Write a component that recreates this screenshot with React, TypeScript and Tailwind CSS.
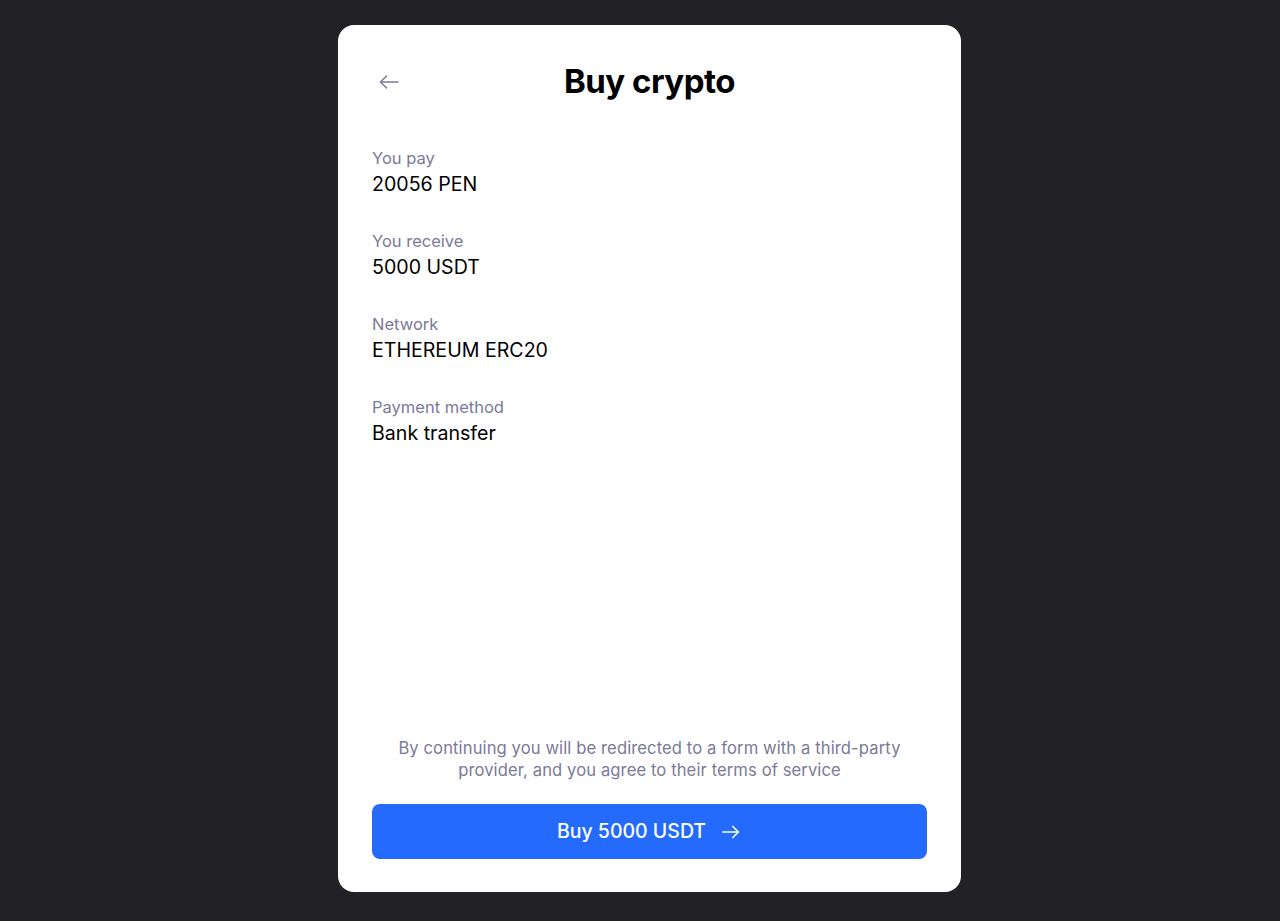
import React from 'react';

const fields = [
  { label: 'You pay', value: '20056 PEN' },
  { label: 'You receive', value: '5000 USDT' },
  { label: 'Network', value: 'ETHEREUM ERC20' },
  { label: 'Payment method', value: 'Bank transfer' },
];

const App: React.FC = () => {
  return (
    <div
      className="min-h-screen w-full bg-[#222126] flex justify-center pt-[25px] pl-[19px]"
      style={{ fontFamily: 'Inter, "Noto Sans", sans-serif' }}
    >
      <div className="w-[623px] h-[867px] bg-white rounded-[16px] flex flex-col px-[34px] pt-[33px] pb-[33px]">
        {/* header */}
        <div className="relative h-[48px] flex items-center justify-center">
          <button className="absolute left-[5px] top-1/2 -translate-y-1/2 text-[#7b7a99]">
            <svg width="24" height="24" viewBox="0 0 24 24" fill="none" stroke="currentColor" strokeWidth="1.5" strokeLinecap="round" strokeLinejoin="round">
              <path d="M21 12H3.5" />
              <path d="M9.5 6l-6 6 6 6" />
            </svg>
          </button>
          <h1 className="text-[33px] font-bold text-black tracking-[-0.5px]">Buy crypto</h1>
        </div>

        {/* details */}
        <div className="mt-[42px] flex flex-col gap-[34px]">
          {fields.map((f) => (
            <div key={f.label} className="flex flex-col">
              <span className="text-[16.5px] leading-5 text-[#7b7a99]">{f.label}</span>
              <span className="mt-[3px] text-[19.6px] leading-[26px] text-black">{f.value}</span>
            </div>
          ))}
        </div>

        <div className="flex-1" />

        {/* footer */}
        <p className="text-center text-[16.6px] leading-[22px] tracking-[0.1px] text-[#7b7a99] px-[10px]">
          By continuing you will be redirected to a form with a third-party provider, and you agree to their terms of service
        </p>
        <button className="mt-[23px] h-[55px] w-full rounded-[8px] bg-[#246bfd] text-white text-[19.5px] font-medium flex items-center justify-center gap-[14px]">
          <span>Buy 5000 USDT</span>
          <svg width="22" height="22" viewBox="0 0 24 24" fill="none" stroke="currentColor" strokeWidth="1.8" strokeLinecap="round" strokeLinejoin="round">
            <path d="M3 12h17" />
            <path d="M14 6l6 6-6 6" />
          </svg>
        </button>
      </div>
    </div>
  );
};

export default App;
